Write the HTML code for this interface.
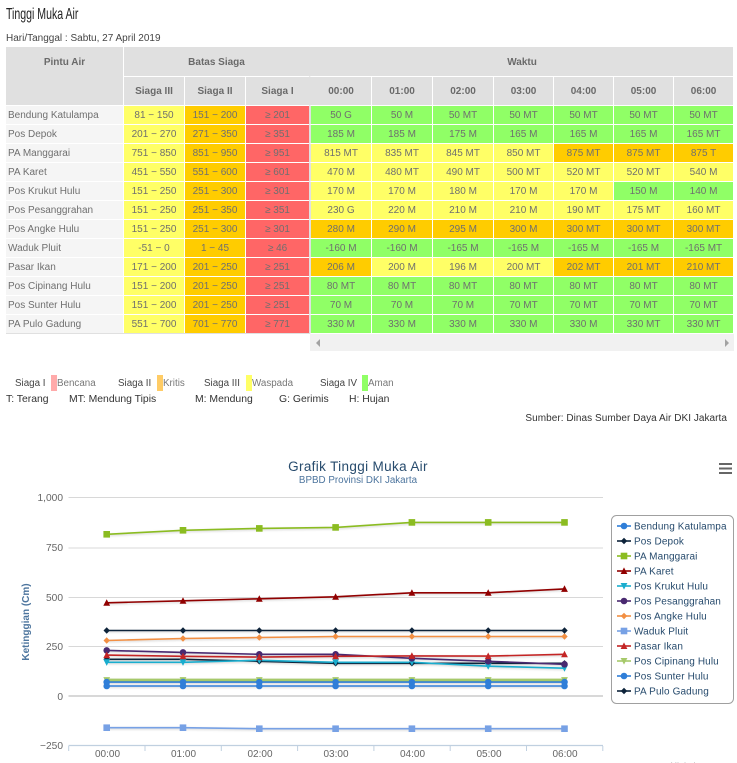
<!DOCTYPE html>
<html><head><meta charset="utf-8"><style>
html,body{margin:0;padding:0;background:#fff;width:737px;height:763px;overflow:hidden}
body{position:relative;font-family:"Liberation Sans",sans-serif;font-size:10px;color:#555}
.a{position:absolute;white-space:nowrap;line-height:14px}
table{position:absolute;left:6px;top:47px;border-collapse:separate;border-spacing:0;table-layout:fixed;width:728px}
td,th{box-sizing:border-box;padding:2px 0 0;text-align:center;border-right:1px solid #fff;border-bottom:1px solid #fff;height:19px;font-size:10px;font-weight:normal;color:#6f6f6f;line-height:16px;overflow:hidden;white-space:nowrap}
th{background:#e0e0e0;font-weight:bold;color:#6a6a6a;height:29px;line-height:26px}
tr.h1 th{height:30px;line-height:27px}
th.p{vertical-align:top;border-right:1px solid #fff}
td.n{background:#f5f5f5;text-align:left;padding-left:2px}
.y{background:#ffff66}.o{background:#ffcc00}.r{background:#ff6666;border-right:0}.g{background:#90ff66}
th.nr{border-right:0}
.f{border-left:2px solid #e0e0e0}
.s{top:377px;font-size:9.8px}
.l{top:392.500px;font-size:10.4px;color:#333}
svg text{font-family:"Liberation Sans",sans-serif}
</style></head><body>
<div class="a" style="left:6px;top:7px;font-size:16px;line-height:16px;color:#222;transform:scaleX(.66);transform-origin:0 0">Tinggi Muka Air</div>
<div class="a" style="left:6px;top:32px;color:#444">Hari/Tanggal : Sabtu, 27 April 2019</div>
<table>
<colgroup><col style="width:118px"><col style="width:61px"><col style="width:61px"><col style="width:63px"><col style="width:63px"><col style="width:61px"><col style="width:61px"><col style="width:60px"><col style="width:60px"><col style="width:60px"><col style="width:60px"></colgroup>
<tr class="h1"><th class="p" rowspan="2" style="background:#e0e0e0">Pintu Air</th><th colspan="3" class="nr">Batas Siaga</th><th colspan="7" class="f">Waktu</th></tr>
<tr><th>Siaga III</th><th>Siaga II</th><th class="nr">Siaga I</th><th class="f">00:00</th><th>01:00</th><th>02:00</th><th>03:00</th><th>04:00</th><th>05:00</th><th>06:00</th></tr>
<tr><td class="n">Bendung Katulampa</td><td class="y">81 − 150</td><td class="o">151 − 200</td><td class="r">≥ 201</td><td class="g f">50 G</td><td class="g">50 M</td><td class="g">50 MT</td><td class="g">50 MT</td><td class="g">50 MT</td><td class="g">50 MT</td><td class="g">50 MT</td></tr>
<tr><td class="n">Pos Depok</td><td class="y">201 − 270</td><td class="o">271 − 350</td><td class="r">≥ 351</td><td class="g f">185 M</td><td class="g">185 M</td><td class="g">175 M</td><td class="g">165 M</td><td class="g">165 M</td><td class="g">165 M</td><td class="g">165 MT</td></tr>
<tr><td class="n">PA Manggarai</td><td class="y">751 − 850</td><td class="o">851 − 950</td><td class="r">≥ 951</td><td class="y f">815 MT</td><td class="y">835 MT</td><td class="y">845 MT</td><td class="y">850 MT</td><td class="o">875 MT</td><td class="o">875 MT</td><td class="o">875 T</td></tr>
<tr><td class="n">PA Karet</td><td class="y">451 − 550</td><td class="o">551 − 600</td><td class="r">≥ 601</td><td class="y f">470 M</td><td class="y">480 MT</td><td class="y">490 MT</td><td class="y">500 MT</td><td class="y">520 MT</td><td class="y">520 MT</td><td class="y">540 M</td></tr>
<tr><td class="n">Pos Krukut Hulu</td><td class="y">151 − 250</td><td class="o">251 − 300</td><td class="r">≥ 301</td><td class="y f">170 M</td><td class="y">170 M</td><td class="y">180 M</td><td class="y">170 M</td><td class="y">170 M</td><td class="g">150 M</td><td class="g">140 M</td></tr>
<tr><td class="n">Pos Pesanggrahan</td><td class="y">151 − 250</td><td class="o">251 − 350</td><td class="r">≥ 351</td><td class="y f">230 G</td><td class="y">220 M</td><td class="y">210 M</td><td class="y">210 M</td><td class="y">190 MT</td><td class="y">175 MT</td><td class="y">160 MT</td></tr>
<tr><td class="n">Pos Angke Hulu</td><td class="y">151 − 250</td><td class="o">251 − 300</td><td class="r">≥ 301</td><td class="o f">280 M</td><td class="o">290 M</td><td class="o">295 M</td><td class="o">300 M</td><td class="o">300 MT</td><td class="o">300 MT</td><td class="o">300 MT</td></tr>
<tr><td class="n">Waduk Pluit</td><td class="y">-51 − 0</td><td class="o">1 − 45</td><td class="r">≥ 46</td><td class="g f">-160 M</td><td class="g">-160 M</td><td class="g">-165 M</td><td class="g">-165 M</td><td class="g">-165 M</td><td class="g">-165 M</td><td class="g">-165 MT</td></tr>
<tr><td class="n">Pasar Ikan</td><td class="y">171 − 200</td><td class="o">201 − 250</td><td class="r">≥ 251</td><td class="o f">206 M</td><td class="y">200 M</td><td class="y">196 M</td><td class="y">200 MT</td><td class="o">202 MT</td><td class="o">201 MT</td><td class="o">210 MT</td></tr>
<tr><td class="n">Pos Cipinang Hulu</td><td class="y">151 − 200</td><td class="o">201 − 250</td><td class="r">≥ 251</td><td class="g f">80 MT</td><td class="g">80 MT</td><td class="g">80 MT</td><td class="g">80 MT</td><td class="g">80 MT</td><td class="g">80 MT</td><td class="g">80 MT</td></tr>
<tr><td class="n">Pos Sunter Hulu</td><td class="y">151 − 200</td><td class="o">201 − 250</td><td class="r">≥ 251</td><td class="g f">70 M</td><td class="g">70 M</td><td class="g">70 M</td><td class="g">70 MT</td><td class="g">70 MT</td><td class="g">70 MT</td><td class="g">70 MT</td></tr>
<tr><td class="n">PA Pulo Gadung</td><td class="y">551 − 700</td><td class="o">701 − 770</td><td class="r">≥ 771</td><td class="g f">330 M</td><td class="g">330 M</td><td class="g">330 M</td><td class="g">330 M</td><td class="g">330 M</td><td class="g">330 MT</td><td class="g">330 MT</td></tr>
</table>
<div style="position:absolute;left:6px;top:333px;width:304px;height:1px;background:#e0e0e0"></div>
<div style="position:absolute;left:310px;top:334px;width:424px;height:17px;background:#f1f1f1"></div>
<div style="position:absolute;left:316px;top:339px;border:4px solid transparent;border-left:0;border-right:4px solid #a3a3a3"></div>
<div style="position:absolute;left:725px;top:339px;border:4px solid transparent;border-right:0;border-left:4px solid #a3a3a3"></div>

<div style="position:absolute;left:51px;top:375px;width:6px;height:16px;background:#ffaaaa"></div>
<div style="position:absolute;left:157px;top:375px;width:6px;height:16px;background:#ffcc66"></div>
<div style="position:absolute;left:246px;top:375px;width:6px;height:16px;background:#ffff66"></div>
<div style="position:absolute;left:362px;top:375px;width:6px;height:16px;background:#90ff66"></div>
<div class="a s" style="left:15px;color:#444">Siaga I</div>
<div class="a s" style="left:57px;color:#777">Bencana</div>
<div class="a s" style="left:118px;color:#444">Siaga II</div>
<div class="a s" style="left:163px;color:#777">Kritis</div>
<div class="a s" style="left:204px;color:#444">Siaga III</div>
<div class="a s" style="left:252px;color:#777">Waspada</div>
<div class="a s" style="left:320px;color:#444">Siaga IV</div>
<div class="a s" style="left:368px;color:#777">Aman</div>
<div class="a l" style="left:6px">T: Terang</div>
<div class="a l" style="left:69px">MT: Mendung Tipis</div>
<div class="a l" style="left:195px">M: Mendung</div>
<div class="a l" style="left:279px">G: Gerimis</div>
<div class="a l" style="left:349px">H: Hujan</div>
<div class="a" style="right:10px;top:412px;color:#333;font-size:10px;letter-spacing:.05px">Sumber: Dinas Sumber Daya Air DKI Jakarta</div>

<svg width="737" height="763" style="position:absolute;left:0;top:0;overflow:hidden" xmlns="http://www.w3.org/2000/svg">
<defs>
<g id="ci"><circle cx="0" cy="0" r="3.3"/></g>
<g id="di"><path d="M0-3.2 3.2 0 0 3.2-3.2 0Z"/></g>
<g id="sq"><rect x="-3.300" y="-3.300" width="6.600" height="6.600"/></g>
<g id="tr"><path d="M0-3.600 3.400 3-3.400 3Z"/></g>
<g id="td"><path d="M-3.400-3 3.400-3 0 3.600Z"/></g>
</defs>
<text x="358" y="471" text-anchor="middle" font-size="13.5" fill="#274b6d" letter-spacing=".35">Grafik Tinggi Muka Air</text>
<text x="358" y="483" text-anchor="middle" font-size="9.8" fill="#4d759e">BPBD Provinsi DKI Jakarta</text>
<g stroke="#666" stroke-width="2"><path d="M719 464h13M719 468.500h13M719 473h13"/></g>
<g stroke="#d8d8d8" stroke-width="1"><path d="M68.5 497.5H603M68.5 548H603M68.5 597.5H603M68.5 646.5H603"/></g>
<path d="M68.5 696H603" stroke="#c0c0c0" stroke-width="1.2"/>
<path d="M68.5 745.5H603" stroke="#c0d0e0" stroke-width="1.2"/>
<path d="M68.7 746v5M145 746v5M221.3 746v5M297.6 746v5M373.9 746v5M450.2 746v5M526.5 746v5M602.8 746v5" stroke="#c0d0e0"/>
<g font-size="10.2" fill="#666" text-anchor="end">
<text x="63" y="501">1,000</text><text x="63" y="551">750</text><text x="63" y="601">500</text><text x="63" y="650">250</text><text x="63" y="700">0</text><text x="63" y="749">−250</text></g>
<g font-size="10" fill="#666" text-anchor="middle">
<text x="107.500" y="757">00:00</text><text x="183.500" y="757">01:00</text><text x="260" y="757">02:00</text><text x="336" y="757">03:00</text><text x="412.500" y="757">04:00</text><text x="489" y="757">05:00</text><text x="565" y="757">06:00</text></g>
<text transform="translate(29,622) rotate(-90)" text-anchor="middle" font-size="10" font-weight="bold" fill="#4d759e">Ketinggian (Cm)</text>

<g fill="none" stroke-width="1.6" style="filter:drop-shadow(1px 1px 1px rgba(0,0,0,.18))">
<polyline stroke="#2f7ed8" points="106.7,686 564.5,686"/>
<polyline stroke="#0d233a" points="106.7,659.3 183,659.3 259.3,661.3 335.6,663.3 411.9,663.3 488.2,663.3 564.5,663.3"/>
<polyline stroke="#8bbc21" points="106.7,534.3 183,530.3 259.3,528.4 335.6,527.4 411.9,522.4 488.2,522.4 564.5,522.4"/>
<polyline stroke="#910000" points="106.7,602.8 183,600.8 259.3,598.8 335.6,596.8 411.9,592.8 488.2,592.8 564.5,588.9"/>
<polyline stroke="#1aadce" points="106.7,662.3 183,662.3 259.3,660.3 335.6,662.3 411.9,662.3 488.2,666.2 564.5,668.2"/>
<polyline stroke="#492970" points="106.7,650.4 183,652.4 259.3,654.3 335.6,654.3 411.9,658.3 488.2,661.3 564.5,664.3"/>
<polyline stroke="#f28f43" points="106.7,640.5 183,638.5 259.3,637.5 335.6,636.5 411.9,636.5 488.2,636.5 564.5,636.5"/>
<polyline stroke="#77a1e5" points="106.7,727.7 183,727.7 259.3,728.7 335.6,728.7 411.9,728.7 488.2,728.7 564.5,728.7"/>
<polyline stroke="#c42525" points="106.7,655.1 183,656.3 259.3,657.1 335.6,656.3 411.9,655.9 488.2,656.1 564.5,654.3"/>
<polyline stroke="#a6c96a" stroke-width="3" points="106.7,680.1 564.5,680.1"/>
<polyline stroke="#2f7ed8" points="106.7,682.1 564.5,682.1"/>
<polyline stroke="#0d233a" points="106.7,630.5 564.5,630.5"/>
</g>
<g fill="#2f7ed8"><use href="#ci" x="106.700" y="686"/><use href="#ci" x="183" y="686"/><use href="#ci" x="259.300" y="686"/><use href="#ci" x="335.600" y="686"/><use href="#ci" x="411.900" y="686"/><use href="#ci" x="488.200" y="686"/><use href="#ci" x="564.500" y="686"/></g>
<g fill="#0d233a"><use href="#di" x="106.700" y="659.3"/><use href="#di" x="183" y="659.3"/><use href="#di" x="259.300" y="661.3"/><use href="#di" x="335.600" y="663.3"/><use href="#di" x="411.900" y="663.3"/><use href="#di" x="488.200" y="663.3"/><use href="#di" x="564.500" y="663.3"/></g>
<g fill="#8bbc21"><use href="#sq" x="106.700" y="534.3"/><use href="#sq" x="183" y="530.3"/><use href="#sq" x="259.300" y="528.4"/><use href="#sq" x="335.600" y="527.4"/><use href="#sq" x="411.900" y="522.4"/><use href="#sq" x="488.200" y="522.4"/><use href="#sq" x="564.500" y="522.4"/></g>
<g fill="#910000"><use href="#tr" x="106.700" y="602.8"/><use href="#tr" x="183" y="600.8"/><use href="#tr" x="259.300" y="598.8"/><use href="#tr" x="335.600" y="596.8"/><use href="#tr" x="411.900" y="592.8"/><use href="#tr" x="488.200" y="592.8"/><use href="#tr" x="564.500" y="588.900"/></g>
<g fill="#1aadce"><use href="#td" x="106.700" y="662.3"/><use href="#td" x="183" y="662.3"/><use href="#td" x="259.300" y="660.3"/><use href="#td" x="335.600" y="662.3"/><use href="#td" x="411.900" y="662.3"/><use href="#td" x="488.200" y="666.2"/><use href="#td" x="564.500" y="668.2"/></g>
<g fill="#492970"><use href="#ci" x="106.700" y="650.4"/><use href="#ci" x="183" y="652.4"/><use href="#ci" x="259.300" y="654.3"/><use href="#ci" x="335.600" y="654.3"/><use href="#ci" x="411.900" y="658.3"/><use href="#ci" x="488.200" y="661.3"/><use href="#ci" x="564.500" y="664.3"/></g>
<g fill="#f28f43"><use href="#di" x="106.700" y="640.5"/><use href="#di" x="183" y="638.5"/><use href="#di" x="259.300" y="637.5"/><use href="#di" x="335.600" y="636.5"/><use href="#di" x="411.900" y="636.5"/><use href="#di" x="488.200" y="636.5"/><use href="#di" x="564.500" y="636.5"/></g>
<g fill="#77a1e5"><use href="#sq" x="106.700" y="727.7"/><use href="#sq" x="183" y="727.7"/><use href="#sq" x="259.300" y="728.7"/><use href="#sq" x="335.600" y="728.7"/><use href="#sq" x="411.900" y="728.7"/><use href="#sq" x="488.200" y="728.7"/><use href="#sq" x="564.500" y="728.7"/></g>
<g fill="#c42525"><use href="#tr" x="106.700" y="655.1"/><use href="#tr" x="183" y="656.3"/><use href="#tr" x="259.300" y="657.1"/><use href="#tr" x="335.600" y="656.3"/><use href="#tr" x="411.900" y="655.900"/><use href="#tr" x="488.200" y="656.1"/><use href="#tr" x="564.500" y="654.3"/></g>
<g fill="#a6c96a"><use href="#td" x="106.700" y="680.1"/><use href="#td" x="183" y="680.1"/><use href="#td" x="259.300" y="680.1"/><use href="#td" x="335.600" y="680.1"/><use href="#td" x="411.900" y="680.1"/><use href="#td" x="488.200" y="680.1"/><use href="#td" x="564.500" y="680.1"/></g>
<g fill="#2f7ed8"><use href="#ci" x="106.700" y="682.1"/><use href="#ci" x="183" y="682.1"/><use href="#ci" x="259.300" y="682.1"/><use href="#ci" x="335.600" y="682.1"/><use href="#ci" x="411.900" y="682.1"/><use href="#ci" x="488.200" y="682.1"/><use href="#ci" x="564.500" y="682.1"/></g>
<g fill="#0d233a"><use href="#di" x="106.700" y="630.5"/><use href="#di" x="183" y="630.5"/><use href="#di" x="259.300" y="630.5"/><use href="#di" x="335.600" y="630.5"/><use href="#di" x="411.900" y="630.5"/><use href="#di" x="488.200" y="630.5"/><use href="#di" x="564.500" y="630.5"/></g>

<rect x="611.500" y="515.500" width="122" height="188" rx="5" fill="#fff" stroke="#a0a0a0"/>
<g stroke-width="1.6">
<path stroke="#2f7ed8" d="M617 526h14"/><path stroke="#0d233a" d="M617 541h14"/><path stroke="#8bbc21" d="M617 556h14"/><path stroke="#910000" d="M617 571h14"/><path stroke="#1aadce" d="M617 586h14"/><path stroke="#492970" d="M617 601h14"/><path stroke="#f28f43" d="M617 616h14"/><path stroke="#77a1e5" d="M617 631h14"/><path stroke="#c42525" d="M617 646h14"/><path stroke="#a6c96a" d="M617 661h14"/><path stroke="#2f7ed8" d="M617 676h14"/><path stroke="#0d233a" d="M617 691h14"/>
</g>
<use href="#ci" x="624" y="526" fill="#2f7ed8"/><use href="#di" x="624" y="541" fill="#0d233a"/><use href="#sq" x="624" y="556" fill="#8bbc21"/><use href="#tr" x="624" y="571" fill="#910000"/><use href="#td" x="624" y="586" fill="#1aadce"/><use href="#ci" x="624" y="601" fill="#492970"/><use href="#di" x="624" y="616" fill="#f28f43"/><use href="#sq" x="624" y="631" fill="#77a1e5"/><use href="#tr" x="624" y="646" fill="#c42525"/><use href="#td" x="624" y="661" fill="#a6c96a"/><use href="#ci" x="624" y="676" fill="#2f7ed8"/><use href="#di" x="624" y="691" fill="#0d233a"/>
<g font-size="10" fill="#274b6d" letter-spacing=".12">
<text x="634" y="529.500">Bendung Katulampa</text><text x="634" y="544.500">Pos Depok</text><text x="634" y="559.500">PA Manggarai</text><text x="634" y="574.500">PA Karet</text><text x="634" y="589.500">Pos Krukut Hulu</text><text x="634" y="604.500">Pos Pesanggrahan</text><text x="634" y="619.500">Pos Angke Hulu</text><text x="634" y="634.500">Waduk Pluit</text><text x="634" y="649.500">Pasar Ikan</text><text x="634" y="664.500">Pos Cipinang Hulu</text><text x="634" y="679.500">Pos Sunter Hulu</text><text x="634" y="694.500">PA Pulo Gadung</text></g>
<text x="733" y="769" text-anchor="end" font-size="9" fill="#909090">Highcharts.com</text>
</svg>
</body></html>
